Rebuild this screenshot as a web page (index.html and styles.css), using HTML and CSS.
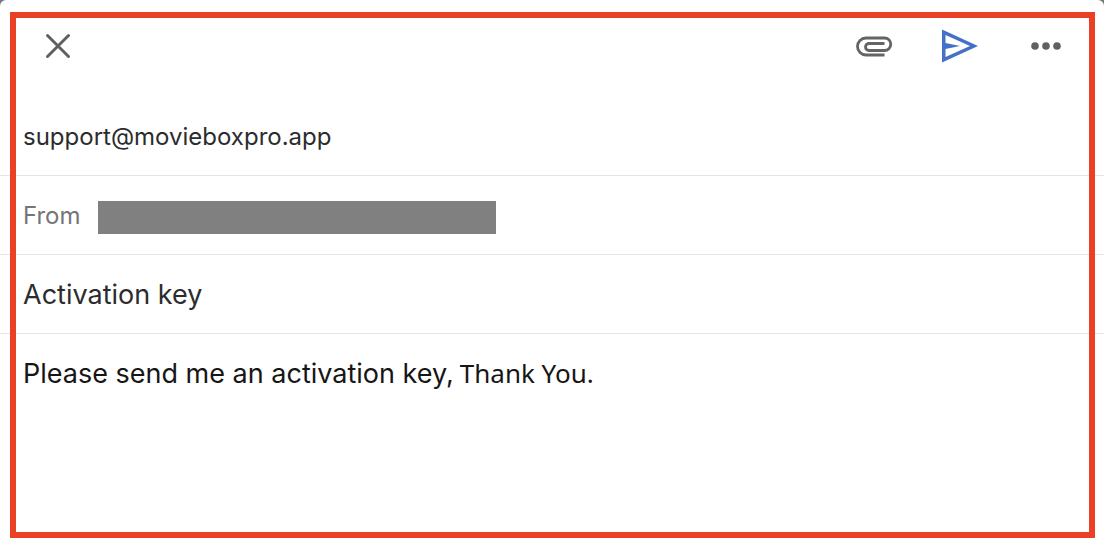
FILE: index.html
```html
<!DOCTYPE html>
<html lang="en">
<head>
    <meta charset="UTF-8">
    <meta name="viewport" content="width=device-width, initial-scale=1.0">
    <title>Compose</title>
    <link rel="stylesheet" href="styles.css">
</head>
<body>
    <form class="compose">
        <div class="toolbar">
            <button type="button" class="icon-button" aria-label="Close">
                <svg width="40" height="40" viewBox="0 0 40 40">
                    <path d="M9.500 9.500L30.500 30.500M30.500 9.500L9.500 30.500" fill="none" stroke="#5f6062" stroke-width="3" stroke-linecap="round"/>
                </svg>
            </button>
            <div class="actions">
                <button type="button" class="icon-button" aria-label="Attach file">
                    <svg width="40" height="40" viewBox="0 0 40 40">
                        <path d="M30.500 29H12A8.500 8.500 0 0 1 12 12H30.500A6 6 0 0 1 30.500 24.500H15A3.400 3.400 0 0 1 15 17.500H30.500" fill="none" stroke="#646466" stroke-width="2.800"/>
                    </svg>
                </button>
                <button type="submit" class="icon-button" aria-label="Send">
                    <svg width="40" height="40" viewBox="0 0 40 40">
                        <path d="M2 3.500L38 20L2 36.500ZM5.500 9V17L20 20L5.500 23V31L30 20Z" fill="#4470c8" fill-rule="evenodd"/>
                    </svg>
                </button>
                <button type="button" class="icon-button" aria-label="More options">
                    <svg width="40" height="40" viewBox="0 0 40 40">
                        <g fill="#606062">
                            <circle cx="9" cy="20" r="3.800"/>
                            <circle cx="20" cy="20" r="3.800"/>
                            <circle cx="31" cy="20" r="3.800"/>
                        </g>
                    </svg>
                </button>
            </div>
        </div>
        <div class="row">
            <input type="email" class="field" aria-label="To" value="support@movieboxpro.app">
        </div>
        <div class="row">
            <span class="label">From</span>
            <span class="redacted"></span>
        </div>
        <div class="row">
            <input type="text" class="field subject" aria-label="Subject" value="Activation key">
        </div>
        <div class="message" contenteditable="true" role="textbox" aria-label="Message" spellcheck="false">Please send me an activation key,<span class="thanks">Thank You.</span></div>
        <div class="highlight"></div>
    </form>
</body>
</html>
```
FILE: styles.css
```css
* {
    box-sizing: border-box;
}
body {
    margin: 0;
    background: #77787a;
    font-family: Inter, "Liberation Sans", sans-serif;
    color: #2c2c2e;
}
.compose {
    position: relative;
    display: flex;
    flex-direction: column;
    min-height: 100vh;
    background: #fff;
    border-radius: 6px 6px 0 0;
}
.toolbar {
    display: flex;
    justify-content: space-between;
    padding: 26px 38px 31px;
}
.actions {
    display: flex;
    gap: 46px;
}
.icon-button {
    display: block;
    padding: 0;
    border: none;
    background: none;
    cursor: pointer;
}
.icon-button svg {
    display: block;
}
.row {
    display: flex;
    align-items: center;
    height: 79px;
    padding: 0 23px;
    border-bottom: 1px solid #e4e4e4;
}
.field {
    width: 100%;
    padding: 0;
    border: none;
    outline: none;
    background: none;
    color: inherit;
    font-family: inherit;
    font-size: 24px;
}
.subject {
    font-size: 27px;
}
.label {
    color: #757577;
    font-size: 24px;
}
.redacted {
    width: 398px;
    height: 33px;
    margin: 4px 0 0 17px;
    background: #808080;
}
.message {
    flex: 1;
    padding: 22px 23px;
    outline: none;
    color: #161616;
    font-size: 27px;
    line-height: 34px;
}
.thanks {
    margin-left: 6px;
    font-family: "Noto Sans", sans-serif;
    font-size: 26px;
}
/* red frame drawn over the whole form */
.highlight {
    position: absolute;
    top: 12px;
    right: 9px;
    bottom: 14px;
    left: 10px;
    border: 6px solid #ea4025;
    pointer-events: none;
}
```
